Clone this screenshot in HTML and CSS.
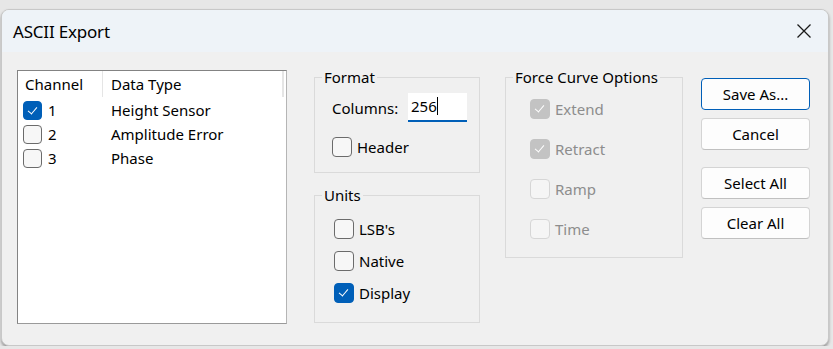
FILE: index.html
```html
<!DOCTYPE html>
<html lang="en">
<head>
    <meta charset="UTF-8">
    <meta name="viewport" content="width=device-width, initial-scale=1.0">
    <title>ASCII Export</title>
    <link rel="stylesheet" href="styles.css">
</head>
<body>
    <div class="window">
        <div class="titlebar">
            <span class="title">ASCII Export</span>
            <svg class="close-icon" width="16" height="16" viewBox="0 0 16 16">
                <path d="M1.5 1.5 L14.5 14.5 M14.5 1.5 L1.5 14.5" stroke="#1a1a1a" stroke-width="1.3" fill="none"/>
            </svg>
        </div>

        <div class="content">
            <div class="channel-list">
                <div class="list-header">
                    <div class="col-channel">Channel</div>
                    <div class="col-type">Data Type</div>
                    <div class="col-rest"></div>
                </div>
                <div class="list-row">
                    <div class="col-channel"><span class="checkbox checked"></span>1</div>
                    <div class="col-type">Height Sensor</div>
                </div>
                <div class="list-row">
                    <div class="col-channel"><span class="checkbox"></span>2</div>
                    <div class="col-type">Amplitude Error</div>
                </div>
                <div class="list-row">
                    <div class="col-channel"><span class="checkbox"></span>3</div>
                    <div class="col-type">Phase</div>
                </div>
            </div>

            <div class="middle-col">
                <fieldset class="group format-group">
                    <legend>Format</legend>
                    <div class="columns-row">
                        <label for="columns">Columns:</label>
                        <div class="text-input" id="columns">256<span class="caret"></span></div>
                    </div>
                    <div class="option"><span class="checkbox"></span>Header</div>
                </fieldset>

                <fieldset class="group units-group">
                    <legend>Units</legend>
                    <div class="option"><span class="checkbox"></span>LSB's</div>
                    <div class="option"><span class="checkbox"></span>Native</div>
                    <div class="option"><span class="checkbox checked"></span>Display</div>
                </fieldset>
            </div>

            <fieldset class="group force-group">
                <legend>Force Curve Options</legend>
                <div class="option disabled"><span class="checkbox checked"></span>Extend</div>
                <div class="option disabled"><span class="checkbox checked"></span>Retract</div>
                <div class="option disabled"><span class="checkbox"></span>Ramp</div>
                <div class="option disabled"><span class="checkbox"></span>Time</div>
            </fieldset>

            <div class="buttons">
                <button class="btn default-btn">Save As...</button>
                <button class="btn">Cancel</button>
                <button class="btn spaced">Select All</button>
                <button class="btn">Clear All</button>
            </div>
        </div>
    </div>
</body>
</html>
```

FILE: styles.css
```css
body {
    margin: 0;
    padding: 0;
    background-color: #e7e7e7;
    font-family: "Noto Sans", "Open Sans", sans-serif;
    font-size: 15px;
    color: #000;
    overflow: hidden;
}
.window {
    width: 828px;
    height: 337px;
    margin: 9px 0 0 1px;
    background-color: #f0f0f0;
    border: 1px solid #c8c8c8;
    border-radius: 8px;
    box-sizing: border-box;
    overflow: hidden;
    box-shadow: 0 2px 3px rgba(0, 0, 0, 0.35);
}
.titlebar {
    height: 42px;
    background-color: #eef3f8;
    display: flex;
    align-items: center;
    justify-content: space-between;
    padding: 0 16px 0 11px;
}
.title {
    font-size: 17px;
    letter-spacing: -0.2px;
}
.close-icon {
    display: block;
}
.content {
    display: flex;
    align-items: flex-start;
    padding: 16px 0 0 15px;
}

/* channel list */
.channel-list {
    width: 270px;
    height: 254px;
    margin-top: 2px;
    box-sizing: border-box;
    background-color: #fff;
    border: 1px solid #838383;
    border-right-color: #b5b5b5;
    border-bottom-color: #9a9a9a;
}
.list-header, .list-row {
    display: flex;
    align-items: center;
}
.list-header {
    height: 26px;
    margin-bottom: 1px;
}
.list-header .col-channel {
    padding-left: 7px;
}
.list-header div {
    height: 26px;
    line-height: 26px;
    border-right: 1px solid #e5e5e5;
    box-sizing: border-box;
}
.list-header .col-rest {
    border-right: 1px solid #e5e5e5;
    flex: 1;
    margin-right: 2px;
}
.col-channel {
    width: 85px;
    box-sizing: border-box;
    display: flex;
    align-items: center;
    padding-left: 5px;
}
.col-type {
    width: 180px;
    padding-left: 8px;
    box-sizing: border-box;
}
.list-row {
    height: 24px;
}
.list-row .checkbox {
    width: 19px;
    height: 19px;
    margin-right: 6px;
}

/* groups */
.middle-col {
    width: 166px;
    margin-left: 27px;
    display: flex;
    flex-direction: column;
    gap: 13px;
}
.group {
    margin: 0;
    border: 1px solid #dadada;
    border-radius: 0;
    min-width: 0;
}
.group legend {
    line-height: 18px;
    padding: 0 2px;
    white-space: nowrap;
}
.format-group {
    height: 105px;
    box-sizing: border-box;
    padding: 7px 0 0 17px;
}
.format-group legend {
    margin-left: -10px;
}
.columns-row {
    display: flex;
    align-items: center;
    height: 29px;
    margin-bottom: 15px;
}
.columns-row label {
    width: 76px;
}
.text-input {
    width: 59px;
    height: 29px;
    box-sizing: border-box;
    background-color: #fff;
    border-bottom: 2px solid #005fb8;
    padding-left: 3px;
    line-height: 27px;
}
.caret {
    display: inline-block;
    width: 1px;
    height: 18px;
    background-color: #000;
    vertical-align: -3px;
}
.option {
    display: flex;
    align-items: center;
    height: 20px;
}
.checkbox {
    display: inline-block;
    width: 20px;
    height: 20px;
    box-sizing: border-box;
    border: 1px solid #6b6b6b;
    border-radius: 4px;
    background-color: #f7f7f7;
    margin-right: 5px;
    flex-shrink: 0;
    position: relative;
}
.checkbox.checked {
    background-color: #005fb8;
    border-color: #005fb8;
}
.checkbox.checked::after {
    content: "";
    position: absolute;
    left: 6px;
    top: 3px;
    width: 4px;
    height: 8px;
    border-right: 1px solid #fff;
    border-bottom: 1px solid #fff;
    transform: rotate(40deg);
}
.units-group {
    height: 137px;
    box-sizing: border-box;
    padding: 15px 0 0 19px;
}
.units-group legend {
    margin-left: -12px;
}
.units-group .option + .option {
    margin-top: 12px;
}
.force-group {
    width: 178px;
    height: 190px;
    box-sizing: border-box;
    margin-left: 25px;
    padding: 13px 0 0 24px;
}
.force-group legend {
    margin-left: -17px;
}
.force-group .option + .option {
    margin-top: 20px;
}
.option.disabled {
    color: #8d8d8d;
}
.option.disabled .checkbox {
    border-color: #d6d6d6;
    background-color: #f5f5f5;
}
.option.disabled .checkbox.checked {
    background-color: #c3c3c3;
    border-color: #c3c3c3;
}

/* buttons */
.buttons {
    width: 109px;
    margin: 10px 0 0 18px;
    display: flex;
    flex-direction: column;
    gap: 8px;
}
.btn {
    height: 32px;
    font-family: inherit;
    font-size: 15px;
    color: #000;
    background-color: #fdfdfd;
    border: 1px solid #d4d4d4;
    border-bottom-color: #c0c0c0;
    border-radius: 4px;
    padding: 0;
}
.default-btn {
    border: 1px solid #005fb8;
}
.btn.spaced {
    margin-top: 9px;
}
```
